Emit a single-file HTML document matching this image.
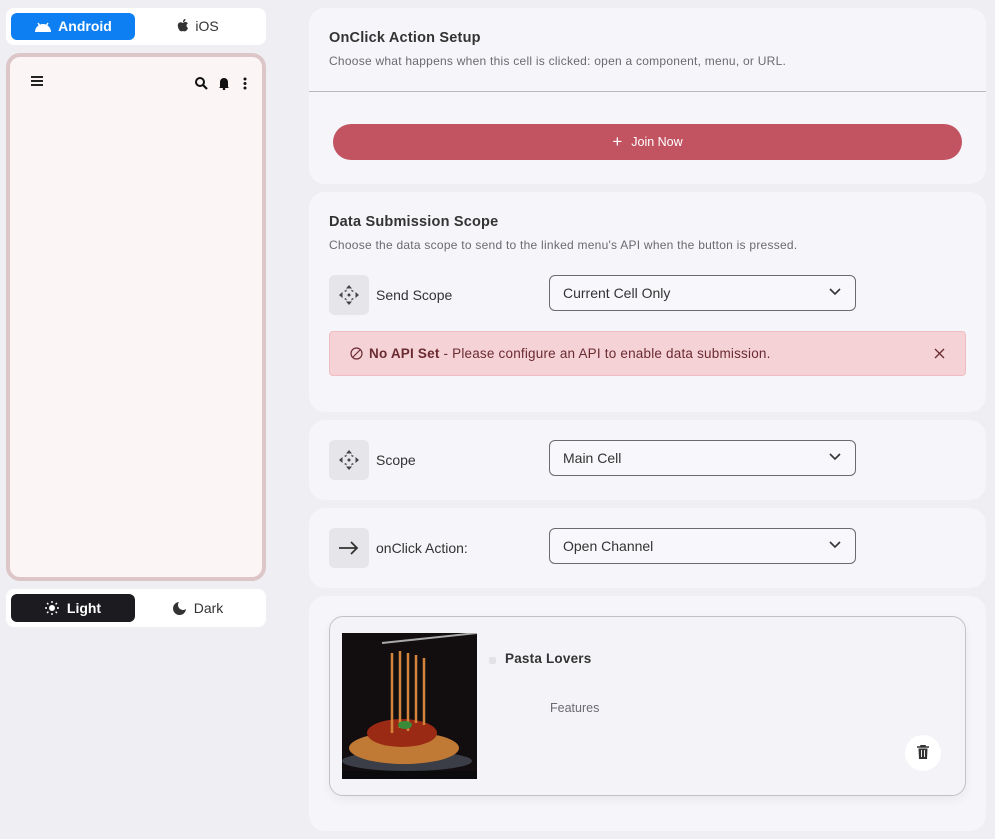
<!DOCTYPE html>
<html><head><style>
*{box-sizing:border-box;margin:0;padding:0}
body{width:995px;height:839px;background:#efeef2;font-family:"Liberation Sans",sans-serif;position:relative;overflow:hidden;color:#333}
.abs{position:absolute}
.card{position:absolute;left:309px;width:677px;background:#f6f5f9;border-radius:16px}
.sel{position:absolute;left:549px;width:307px;height:36px;border:1px solid #6a6a70;border-radius:6px;background:#f8f7fb;font-size:14px;color:#333;padding-left:13px;line-height:34px}
.sel svg{position:absolute;right:14px;top:12px}
.ib{position:absolute;left:329px;width:40px;height:40px;background:#e6e5ea;border-radius:6px;display:flex;align-items:center;justify-content:center}
.lbl{position:absolute;left:376px;font-size:14px;color:#333}
.sub{position:absolute;left:329px;font-size:12px;letter-spacing:0.25px;color:#6a6a70}
.ttl{position:absolute;left:329px;font-weight:bold;font-size:14.5px;letter-spacing:0.2px;color:#333}
</style></head><body>
<div class="abs" style="left:6px;top:8px;width:260px;height:37px;background:#fff;border-radius:8px"></div>
<div class="abs" style="left:11px;top:13px;width:124px;height:27px;background:#0d7ff2;border-radius:6px;color:#fff;font-weight:bold;font-size:14px;line-height:27px;text-align:center">
<svg width="18" height="10" viewBox="0 0 18 10" style="vertical-align:-1px;margin-right:6px"><path d="M1 10 A8 8 0 0 1 17 10Z" fill="#fff"/><path d="M4 1 L6 4 M14 1 L12 4" stroke="#fff" stroke-width="1.5"/></svg>Android</div>
<div class="abs" style="left:135px;top:13px;width:126px;height:27px;font-size:14px;line-height:27px;text-align:center;color:#333">
<svg width="12" height="13" viewBox="0 0 12 13" style="vertical-align:-1px;margin-right:6px"><path d="M6 4 C3 2 0 4 1 8 C2 12 4 13 6 12 C8 13 10 12 11 9 C9 8 9 5 11 4.5 C9 2 7 3 6 4Z M6 3 C6 1 7 0 8.5 0 C8.5 2 7 3 6 3Z" fill="#333"/></svg>iOS</div>
<div class="abs" style="left:6px;top:53px;width:260px;height:528px;border:4px solid #dcc6c8;border-radius:14px;background:#fcf5f5"></div>
<div class="abs" style="left:31px;top:76px;width:12px"><div style="height:2px;background:#222;margin-bottom:2px"></div><div style="height:2px;background:#222;margin-bottom:2px"></div><div style="height:2px;background:#222"></div></div>
<svg class="abs" style="left:194px;top:76px" width="60" height="14" viewBox="0 0 60 14"><circle cx="6" cy="6" r="4" stroke="#111" stroke-width="2" fill="none"/><path d="M9 9 L13 13" stroke="#111" stroke-width="2.2"/><path d="M26 11 L26 6 A4 4 0 0 1 34 6 L34 11 L35 12 L25 12Z" fill="#111"/><circle cx="30" cy="13" r="1.3" fill="#111"/><circle cx="51" cy="3" r="1.5" fill="#111"/><circle cx="51" cy="7.5" r="1.5" fill="#111"/><circle cx="51" cy="12" r="1.5" fill="#111"/></svg>
<div class="abs" style="left:6px;top:589px;width:260px;height:38px;background:#fff;border-radius:8px"></div>
<div class="abs" style="left:11px;top:594px;width:124px;height:28px;background:#1c1c20;border-radius:6px;color:#fff;font-weight:bold;font-size:14px;line-height:28px;text-align:center">
<svg width="14" height="14" viewBox="0 0 14 14" style="vertical-align:-2px;margin-right:8px"><circle cx="7" cy="7" r="3" fill="#fff"/><g stroke="#fff" stroke-width="1.4"><path d="M7 0V2M7 12V14M0 7H2M12 7H14M2 2L3.4 3.4M10.6 10.6L12 12M2 12L3.4 10.6M10.6 3.4L12 2"/></g></svg>Light</div>
<div class="abs" style="left:135px;top:594px;width:126px;height:28px;font-size:14px;line-height:28px;text-align:center;color:#333">
<svg width="13" height="13" viewBox="0 0 13 13" style="vertical-align:-2px;margin-right:8px"><path d="M6 0 A6.5 6.5 0 1 0 13 7 A5 5 0 0 1 6 0Z" fill="#333"/></svg>Dark</div>

<div class="card" style="top:8px;height:176px"></div>
<div class="ttl" style="top:30px">OnClick Action Setup</div>
<div class="sub" style="top:54px">Choose what happens when this cell is clicked: open a component, menu, or URL.</div>
<div class="abs" style="left:309px;top:91px;width:677px;height:1px;background:#b9b8bf"></div>
<div class="abs" style="left:333px;top:124px;width:629px;height:36px;background:#c25462;border-radius:18px;color:#fff;font-size:12.5px;line-height:36px;text-align:center"><span style="font-size:17px;vertical-align:-1px;margin-right:9px">+</span>Join Now</div>

<div class="card" style="top:192px;height:220px"></div>
<div class="ttl" style="top:214px">Data Submission Scope</div>
<div class="sub" style="top:238px">Choose the data scope to send to the linked menu's API when the button is pressed.</div>
<div class="ib" style="top:275px"><svg width="22" height="22" viewBox="0 0 22 22" fill="#444"><path d="M11 1 L14 4.5 H8Z M11 21 L14 17.5 H8Z M1 11 L4.5 8 V14Z M21 11 L17.5 8 V14Z"/><circle cx="11" cy="11" r="1.5"/><path d="M6 7 L9 5.5 L8 8Z M16 7 L13 5.5 L14 8Z M6 15 L9 16.5 L8 14Z M16 15 L13 16.5 L14 14Z"/></svg></div>
<div class="lbl" style="top:287px">Send Scope</div>
<div class="sel" style="top:275px">Current Cell Only<svg width="12" height="8" viewBox="0 0 12 8"><path d="M1 1 L6 6 L11 1" stroke="#333" stroke-width="1.6" fill="none"/></svg></div>
<div class="abs" style="left:329px;top:331px;width:637px;height:45px;background:#f4d2d5;border:1px solid #efbcc2;border-radius:4px;font-size:13.5px;letter-spacing:0.2px;color:#6b2b32;line-height:43px;padding-left:20px">
<svg width="13" height="13" viewBox="0 0 13 13" style="vertical-align:-2px;margin-right:6px"><circle cx="6.5" cy="6.5" r="5.5" stroke="#6b2b32" stroke-width="1.2" fill="none"/><path d="M3 10 L10 3" stroke="#6b2b32" stroke-width="1.2"/></svg><b>No API Set</b> - Please configure an API to enable data submission.
<svg width="11" height="11" viewBox="0 0 11 11" style="position:absolute;right:20px;top:16px"><path d="M1 1L10 10M10 1L1 10" stroke="#6b2b32" stroke-width="1.3"/></svg></div>

<div class="card" style="top:420px;height:80px"></div>
<div class="ib" style="top:440px"><svg width="22" height="22" viewBox="0 0 22 22" fill="#444"><path d="M11 1 L14 4.5 H8Z M11 21 L14 17.5 H8Z M1 11 L4.5 8 V14Z M21 11 L17.5 8 V14Z"/><circle cx="11" cy="11" r="1.5"/><path d="M6 7 L9 5.5 L8 8Z M16 7 L13 5.5 L14 8Z M6 15 L9 16.5 L8 14Z M16 15 L13 16.5 L14 14Z"/></svg></div>
<div class="lbl" style="top:452px">Scope</div>
<div class="sel" style="top:440px">Main Cell<svg width="12" height="8" viewBox="0 0 12 8"><path d="M1 1 L6 6 L11 1" stroke="#333" stroke-width="1.6" fill="none"/></svg></div>

<div class="card" style="top:508px;height:80px"></div>
<div class="ib" style="top:528px"><svg width="20" height="14" viewBox="0 0 20 14"><path d="M0 7 H18 M12 1 L18 7 L12 13" stroke="#333" stroke-width="1.8" fill="none"/></svg></div>
<div class="lbl" style="top:540px">onClick Action:</div>
<div class="sel" style="top:528px">Open Channel<svg width="12" height="8" viewBox="0 0 12 8"><path d="M1 1 L6 6 L11 1" stroke="#333" stroke-width="1.6" fill="none"/></svg></div>

<div class="card" style="top:596px;height:235px"></div>
<div class="abs" style="left:329px;top:616px;width:637px;height:180px;border:1px solid #c2c1c7;border-radius:14px;background:#f4f3f8;box-shadow:0 4px 10px rgba(0,0,0,0.05)"></div>
<svg class="abs" style="left:342px;top:633px" width="135" height="146" viewBox="0 0 135 146">
<rect width="135" height="146" fill="#120e0f"/>
<ellipse cx="65" cy="128" rx="65" ry="10" fill="#3b3e47"/>
<ellipse cx="62" cy="115" rx="55" ry="16" fill="#c07a35"/>
<ellipse cx="60" cy="100" rx="35" ry="14" fill="#9b2a14"/>
<g stroke="#d4843a" stroke-width="2.5"><path d="M50 20 V100 M58 18 V95 M66 20 V98 M74 22 V90 M82 25 V92"/></g>
<path d="M40 10 L135 0" stroke="#aaa" stroke-width="2"/>
<ellipse cx="63" cy="92" rx="7" ry="4" fill="#3b8a3a"/>
<rect y="138" width="135" height="8" fill="#0b0b0d"/>
</svg>
<div class="abs" style="left:489px;top:657px;width:7px;height:7px;background:#e3e2e7;border-radius:2px"></div>
<div class="abs" style="left:505px;top:651px;font-weight:bold;font-size:13.5px;letter-spacing:0.2px;color:#333">Pasta Lovers</div>
<div class="abs" style="left:550px;top:701px;font-size:12.5px;color:#6a6a70">Features</div>
<div class="abs" style="left:905px;top:735px;width:36px;height:36px;background:#fff;border-radius:50%"></div>
<svg class="abs" style="left:917px;top:745px" width="12" height="14" viewBox="0 0 12 14"><path d="M0 2 H12 M4 2 V0.5 H8 V2" stroke="#333" stroke-width="1.5" fill="none"/><path d="M1.5 3.5 H10.5 L10 14 H2Z" fill="#333"/><path d="M4.5 5 V12 M7.5 5 V12" stroke="#fff" stroke-width="0.9"/></svg>
</body></html>
